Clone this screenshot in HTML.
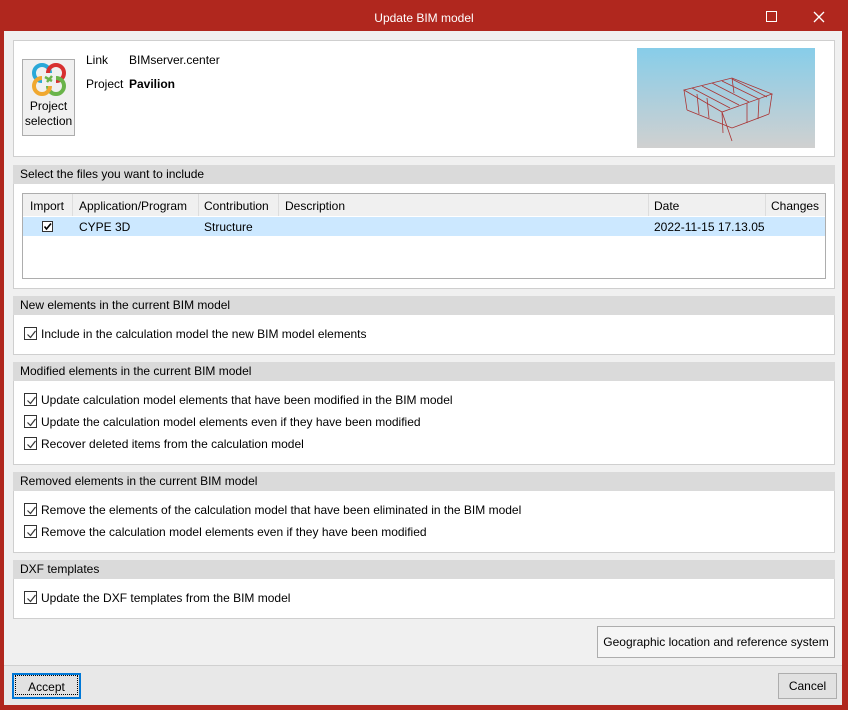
<!DOCTYPE html>
<html><head><style>
*{box-sizing:border-box;margin:0;padding:0}
body{width:848px;height:710px;background:#b0271e;font-family:"Liberation Sans",sans-serif;font-size:12px;color:#000;position:relative;overflow:hidden}
.abs{position:absolute}
.title{left:0;top:0;width:848px;height:31px;color:#fff;text-align:center;line-height:36px;font-size:12px}
.client{left:4px;top:31px;width:838px;height:674px;background:#f0f0f0}
.panel{position:absolute;left:13px;width:822px;background:#fff;border:1px solid #cfcfcf}
.hdr{position:absolute;left:13px;width:822px;height:19px;background:#dadada;line-height:19px;padding-left:7px}
.cb{position:absolute;left:24px;width:13px;height:13px;border:1px solid #333;background:#fff}
.cb svg{position:absolute;left:1px;top:1px}
.lbl{position:absolute;left:41px;line-height:14px}
.btn{position:absolute;background:#e1e1e1;border:1px solid #adadad;text-align:center}
</style></head><body>
<div class="abs title">Update BIM model</div>
<div class="abs" style="left:766px;top:11px;width:11px;height:11px;border:1px solid #fff"></div>
<svg class="abs" style="left:813px;top:11px" width="12" height="12"><path d="M1 1L11 11M11 1L1 11" stroke="#fff" stroke-width="1.3"/></svg>
<div class="abs client"></div>

<div class="panel" style="top:40px;height:117px"></div>
<div class="abs" style="left:22px;top:59px;width:53px;height:77px;background:#f0f0f0;border:1px solid #adadad;text-align:center;line-height:15px">
<svg width="38" height="36" viewBox="0 0 38 36" style="margin-top:1px;display:block;margin-left:7px">
<path d="M12 20 A8 8 0 1 1 20 12" fill="none" stroke="#2aa8d8" stroke-width="4"/>
<path d="M18 12 A8 8 0 1 1 26 20" fill="none" stroke="#d83030" stroke-width="4"/>
<path d="M26 17 A8 8 0 1 1 18 25" fill="none" stroke="#6ab44a" stroke-width="4"/>
<path d="M20 25 A8 8 0 1 1 12 17" fill="none" stroke="#f0a830" stroke-width="4"/>
<path d="M15 16 L22 20 M22 15 L17 21" stroke="#6ab44a" stroke-width="2.5"/>
</svg>
<div style="margin-top:2px">Project<br>selection</div></div>
<div class="abs" style="left:86px;top:53px">Link</div>
<div class="abs" style="left:129px;top:53px">BIMserver.center</div>
<div class="abs" style="left:86px;top:77px">Project</div>
<div class="abs" style="left:129px;top:77px;font-weight:bold">Pavilion</div>
<div class="abs" style="left:637px;top:48px;width:178px;height:100px;background:linear-gradient(#87cde9,#d0d0d0)">
<svg width="178" height="100"><g stroke="#a33" stroke-width="0.8" fill="none">
<path d="M47 42 L95 30 L135 46 L85 64 Z"/><path d="M47 42 L50 62 M85 64 L95 93 M135 46 L132 66 M95 30 L97 45"/>
<path d="M55 40 L93 60 M65 38 L102 57 M75 35 L112 54 M85 33 L122 51 M95 31 L130 49"/>
<path d="M50 62 L95 80 L132 66"/><path d="M60 46 L62 66 M70 50 L72 70 M85 64 L86 85 M110 55 L110 75 M122 51 L121 71"/>
</g></svg></div>

<div class="hdr" style="top:165px">Select the files you want to include</div>
<div class="panel" style="top:184px;height:105px;border-top:none"></div>
<div class="abs" style="left:22px;top:193px;width:804px;height:86px;border:1px solid #adadad;background:#fff"></div>
<div class="abs" style="left:23px;top:194px;width:802px;height:22px;background:#f0f0f0"></div>
<div class="abs" style="left:23px;top:217px;width:802px;height:19px;background:#cce8ff"></div>
<div class="abs" style="left:72px;top:194px;width:1px;height:22px;background:#ddd"></div>
<div class="abs" style="left:198px;top:194px;width:1px;height:22px;background:#ddd"></div>
<div class="abs" style="left:278px;top:194px;width:1px;height:22px;background:#ddd"></div>
<div class="abs" style="left:648px;top:194px;width:1px;height:22px;background:#ddd"></div>
<div class="abs" style="left:765px;top:194px;width:1px;height:22px;background:#ddd"></div>
<div class="abs" style="left:30px;top:199px">Import</div>
<div class="abs" style="left:79px;top:199px">Application/Program</div>
<div class="abs" style="left:204px;top:199px">Contribution</div>
<div class="abs" style="left:285px;top:199px">Description</div>
<div class="abs" style="left:654px;top:199px">Date</div>
<div class="abs" style="left:771px;top:199px">Changes</div>
<div class="abs" style="left:42px;top:221px;width:11px;height:11px;border:1px solid #333;background:#fff"><svg width="9" height="9" style="position:absolute;left:0;top:0"><path d="M1.5 4.5L3.5 7L8 1.5" stroke="#000" stroke-width="1.6" fill="none"/></svg></div>
<div class="abs" style="left:79px;top:220px">CYPE 3D</div>
<div class="abs" style="left:204px;top:220px">Structure</div>
<div class="abs" style="left:654px;top:220px">2022-11-15 17.13.05</div>

<div class="hdr" style="top:296px">New elements in the current BIM model</div>
<div class="panel" style="top:315px;height:40px;border-top:none"></div>
<div class="hdr" style="top:362px">Modified elements in the current BIM model</div>
<div class="panel" style="top:381px;height:84px;border-top:none"></div>
<div class="hdr" style="top:472px">Removed elements in the current BIM model</div>
<div class="panel" style="top:491px;height:62px;border-top:none"></div>
<div class="hdr" style="top:560px">DXF templates</div>
<div class="panel" style="top:579px;height:40px;border-top:none"></div>

<div class="cb" style="top:327px"><svg width="11" height="11"><path d="M1.5 5.5L4.5 8.5L9.5 2" stroke="#333" stroke-width="1.2" fill="none"/></svg></div>
<div class="lbl" style="top:327px">Include in the calculation model the new BIM model elements</div>
<div class="cb" style="top:393px"><svg width="11" height="11"><path d="M1.5 5.5L4.5 8.5L9.5 2" stroke="#333" stroke-width="1.2" fill="none"/></svg></div>
<div class="lbl" style="top:393px">Update calculation model elements that have been modified in the BIM model</div>
<div class="cb" style="top:415px"><svg width="11" height="11"><path d="M1.5 5.5L4.5 8.5L9.5 2" stroke="#333" stroke-width="1.2" fill="none"/></svg></div>
<div class="lbl" style="top:415px">Update the calculation model elements even if they have been modified</div>
<div class="cb" style="top:437px"><svg width="11" height="11"><path d="M1.5 5.5L4.5 8.5L9.5 2" stroke="#333" stroke-width="1.2" fill="none"/></svg></div>
<div class="lbl" style="top:437px">Recover deleted items from the calculation model</div>
<div class="cb" style="top:503px"><svg width="11" height="11"><path d="M1.5 5.5L4.5 8.5L9.5 2" stroke="#333" stroke-width="1.2" fill="none"/></svg></div>
<div class="lbl" style="top:503px">Remove the elements of the calculation model that have been eliminated in the BIM model</div>
<div class="cb" style="top:525px"><svg width="11" height="11"><path d="M1.5 5.5L4.5 8.5L9.5 2" stroke="#333" stroke-width="1.2" fill="none"/></svg></div>
<div class="lbl" style="top:525px">Remove the calculation model elements even if they have been modified</div>
<div class="cb" style="top:591px"><svg width="11" height="11"><path d="M1.5 5.5L4.5 8.5L9.5 2" stroke="#333" stroke-width="1.2" fill="none"/></svg></div>
<div class="lbl" style="top:591px">Update the DXF templates from the BIM model</div>

<div class="btn" style="left:597px;top:626px;width:238px;height:32px;line-height:30px;background:#f5f5f5">Geographic location and reference system</div>
<div class="abs" style="left:4px;top:665px;width:838px;height:40px;background:#e8e8e8;border-top:1px solid #d0d0d0"></div>
<div class="btn" style="left:12px;top:673px;width:69px;height:26px;line-height:22px;border:2px solid #0078d7"><div style="border:1px dotted #000;height:20px;margin:0 1px">Accept</div></div>
<div class="btn" style="left:778px;top:673px;width:59px;height:26px;line-height:24px">Cancel</div>
</body></html>
